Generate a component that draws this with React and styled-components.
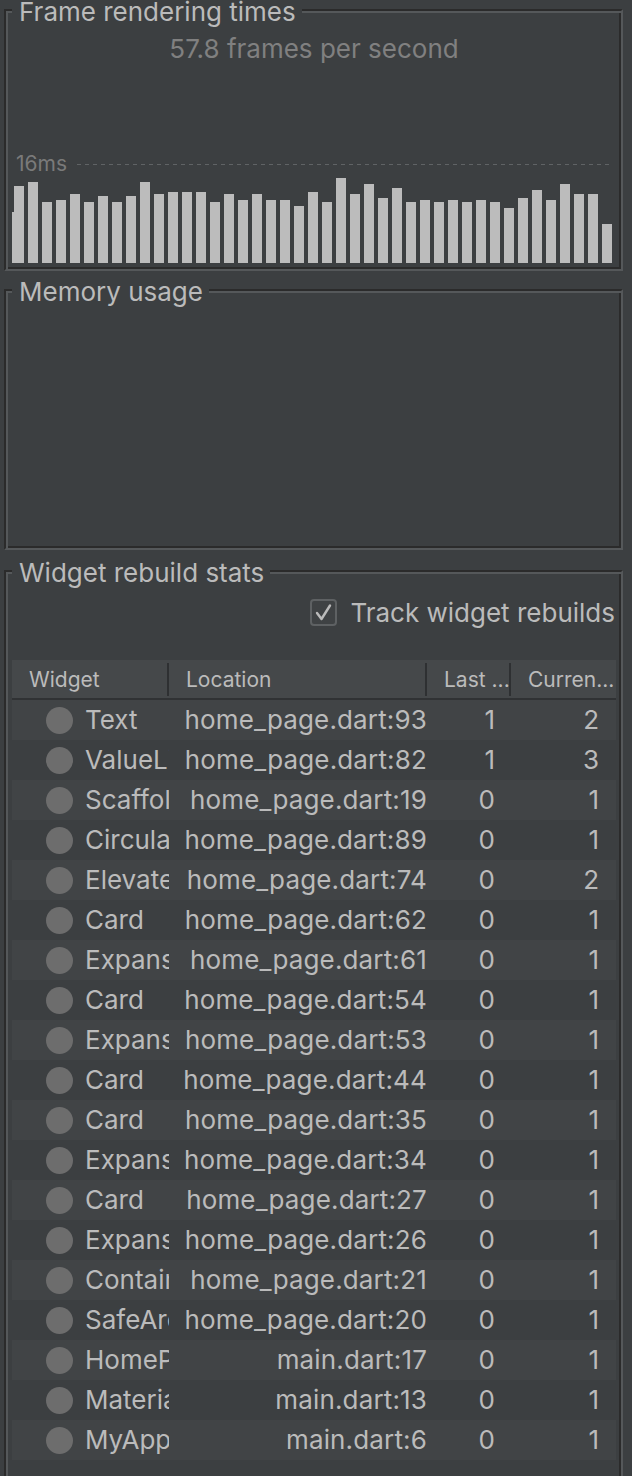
import React from "react";
import styled, { createGlobalStyle } from "styled-components";

const Global = createGlobalStyle`
  html, body { margin: 0; padding: 0; background: #3c3f41; }
  body {
    font-family: Inter, "Noto Sans", "Liberation Sans", sans-serif;
    color: #bbbbbb;
    overflow: hidden;
  }
`;

const Page = styled.div`
  width: 632px;
  height: 1476px;
  box-sizing: border-box;
  padding: 0 9px 0 4px;
  overflow: hidden;
  display: flex;
  flex-direction: column;
`;

const Frame = styled.section`
  position: relative;
  flex-shrink: 0;
  margin-top: ${(p) => p.$top}px;
  border-style: solid;
  border-width: 2px;
  border-color: #2b2b2b #55585a #55585a #2b2b2b;
  box-shadow: inset 2px 2px 0 #55585a, inset -2px -2px 0 #2b2b2b;
  padding: 0 5px ${(p) => p.$pb || 0}px 6px;
`;

const Legend = styled.h2`
  position: absolute;
  top: -12px;
  left: 6px;
  margin: 0;
  padding: 0 6px 0 7px;
  background: #3c3f41;
  font-size: 26px;
  line-height: 26px;
  font-weight: 400;
  color: #bbbbbb;
  white-space: nowrap;
`;

const FpsText = styled.div`
  margin-top: 23px;
  height: 30px;
  line-height: 30px;
  text-align: center;
  font-size: 26px;
  color: #808080;
`;

const ThresholdRow = styled.div`
  margin-top: 90px;
  height: 20px;
  display: flex;
  align-items: center;
  gap: 10px;
  padding-left: 4px;
`;

const ThresholdLabel = styled.span`
  font-size: 21px;
  line-height: 20px;
  color: #7a7a7a;
`;

const DashLine = styled.div`
  flex: 1;
  height: 1px;
  margin-right: 6px;
  background: repeating-linear-gradient(to right, #606365 0 4px, transparent 4px 8px);
`;

const Bars = styled.div`
  height: 89px;
  display: flex;
  align-items: flex-end;
  gap: 4px;
`;

const Bar = styled.div`
  width: ${(p) => (p.$partial ? 2 : 10)}px;
  margin-right: ${(p) => (p.$partial ? -4 : 0)}px;
  background: #bcbcbc;
  flex-shrink: 0;
`;

const MemoryBody = styled.div`
  height: 257px;
`;

const CheckRow = styled.label`
  margin-top: 25px;
  height: 30px;
  display: flex;
  justify-content: flex-end;
  align-items: center;
  gap: 13px;
  padding-right: 1px;
  font-size: 26px;
  color: #bbbbbb;
`;

const CheckBox = styled.span`
  width: 27px;
  height: 27px;
  box-sizing: border-box;
  border: 2px solid #5e6163;
  border-radius: 4px;
  background: #3f4244;
  display: flex;
  align-items: center;
  justify-content: center;
`;

const Table = styled.div`
  margin-top: 33px;
`;

const cols = "157px 258px 84px 105px";

const HeaderRow = styled.div`
  display: grid;
  grid-template-columns: ${cols};
  height: 38px;
  background: #45484a;
  border-bottom: 2px solid #303234;
`;

const HeaderCell = styled.div`
  position: relative;
  padding-left: 17px;
  font-size: 21px;
  line-height: 40px;
  white-space: nowrap;
  overflow: hidden;
  &::after {
    content: "";
    display: ${(p) => (p.$divider ? "block" : "none")};
    position: absolute;
    right: 0;
    top: 3px;
    bottom: 2px;
    width: 2px;
    background: #2e3032;
  }
`;

const Row = styled.div`
  display: grid;
  grid-template-columns: ${cols};
  height: 40px;
  align-items: center;
  background: ${(p) => (p.$stripe ? "#414446" : "#3c3f41")};
  font-size: 26px;
  line-height: 40px;
`;

const NameCell = styled.div`
  display: flex;
  align-items: center;
  gap: 12px;
  padding-left: 34px;
  overflow: hidden;
  white-space: nowrap;
`;

const Dot = styled.span`
  width: 27px;
  height: 27px;
  border-radius: 50%;
  background: #6d6d6d;
  flex-shrink: 0;
`;

const LocCell = styled.div`
  text-align: right;
  overflow: hidden;
  white-space: nowrap;
  letter-spacing: 0.15px;
`;

const NumCell = styled.div`
  text-align: right;
  padding-right: ${(p) => p.$pr}px;
`;

const barTops = [186,182,202,200,194,202,196,202,196,182,194,192,192,192,202,194,200,194,200,200,206,192,202,178,194,184,198,188,202,200,202,200,202,200,202,208,198,190,200,184,194,194,224];

const rows = [
  ["Text", "home_page.dart:93", 1, 2],
  ["ValueListenableBuilder", "home_page.dart:82", 1, 3],
  ["Scaffold", "home_page.dart:19", 0, 1],
  ["CircularProgressIndicator", "home_page.dart:89", 0, 1],
  ["ElevatedButton", "home_page.dart:74", 0, 2],
  ["Card", "home_page.dart:62", 0, 1],
  ["ExpansionTile", "home_page.dart:61", 0, 1],
  ["Card", "home_page.dart:54", 0, 1],
  ["ExpansionTile", "home_page.dart:53", 0, 1],
  ["Card", "home_page.dart:44", 0, 1],
  ["Card", "home_page.dart:35", 0, 1],
  ["ExpansionTile", "home_page.dart:34", 0, 1],
  ["Card", "home_page.dart:27", 0, 1],
  ["ExpansionTile", "home_page.dart:26", 0, 1],
  ["Container", "home_page.dart:21", 0, 1],
  ["SafeArea", "home_page.dart:20", 0, 1],
  ["HomePage", "main.dart:17", 0, 1],
  ["MaterialApp", "main.dart:13", 0, 1],
  ["MyApp", "main.dart:6", 0, 1],
];

export default function App() {
  return (
    <>
      <Global />
      <Page>
        <Frame $top={9} $pb={6}>
          <Legend>Frame rendering times</Legend>
          <FpsText>57.8 frames per second</FpsText>
          <ThresholdRow>
            <ThresholdLabel>16ms</ThresholdLabel>
            <DashLine />
          </ThresholdRow>
          <Bars>
            <Bar $partial style={{ height: 51 }} />
            {barTops.map((t, i) => (
              <Bar key={i} style={{ height: 263 - t }} />
            ))}
          </Bars>
        </Frame>

        <Frame $top={18}>
          <Legend>Memory usage</Legend>
          <MemoryBody />
        </Frame>

        <Frame $top={20} $pb={40}>
          <Legend>Widget rebuild stats</Legend>
          <CheckRow>
            <CheckBox>
              <svg width="23" height="23" viewBox="0 0 23 23">
                <path d="M5 12 L9.5 18 L18 4.5" fill="none" stroke="#bbbbbb" strokeWidth="2.4" strokeLinecap="round" strokeLinejoin="round" />
              </svg>
            </CheckBox>
            Track widget rebuilds
          </CheckRow>
          <Table>
            <HeaderRow>
              <HeaderCell $divider>Widget</HeaderCell>
              <HeaderCell $divider>Location</HeaderCell>
              <HeaderCell $divider>Last ...</HeaderCell>
              <HeaderCell>Curren...</HeaderCell>
            </HeaderRow>
            {rows.map(([name, loc, last, cur], i) => (
              <Row key={i} $stripe={i % 2 === 0}>
                <NameCell>
                  <Dot />
                  {name}
                </NameCell>
                <LocCell>{loc}</LocCell>
                <NumCell $pr={16}>{last}</NumCell>
                <NumCell $pr={17}>{cur}</NumCell>
              </Row>
            ))}
          </Table>
        </Frame>
      </Page>
    </>
  );
}
